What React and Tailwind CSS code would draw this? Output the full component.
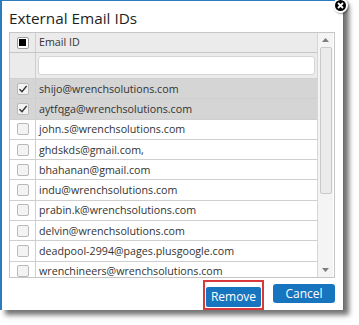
const emails = [
  { email: "shijo@wrenchsolutions.com", checked: true },
  { email: "aytfqga@wrenchsolutions.com", checked: true },
  { email: "john.s@wrenchsolutions.com", checked: false },
  { email: "ghdskds@gmail.com,", checked: false },
  { email: "bhahanan@gmail.com", checked: false },
  { email: "indu@wrenchsolutions.com", checked: false },
  { email: "prabin.k@wrenchsolutions.com", checked: false },
  { email: "delvin@wrenchsolutions.com", checked: false },
  { email: "deadpool-2994@pages.plusgoogle.com", checked: false },
  { email: "wrenchineers@wrenchsolutions.com", checked: false },
];

function Checkbox({ checked }) {
  return (
    <span className="flex h-[12px] w-[12px] items-center justify-center rounded-[2px] border border-[#b9b9b9] bg-[#f3f3f3]">
      {checked && (
        <svg width="10" height="10" viewBox="0 0 10 10">
          <path d="M1.5 5.2 L4 7.8 L8.6 2" fill="none" stroke="#333" strokeWidth="1.4" />
        </svg>
      )}
    </span>
  );
}

export default function App() {
  return (
    <div className="h-[325px] w-[359px] bg-white" style={{ fontFamily: '"Open Sans", sans-serif' }}>
      <div className="relative h-[310px] w-[344px] border-l-2 border-r border-t border-[#2b7bbd] bg-white pl-[7px] pr-[8px] shadow-[5px_5px_5px_rgba(0,0,0,0.55)]">
        {/* close button */}
        <span className="absolute left-[331px] top-[-3px] flex h-[15px] w-[15px] items-center justify-center rounded-full border-2 border-white bg-black shadow-[1px_1px_2px_rgba(0,0,0,0.4)]">
          <svg width="7" height="7" viewBox="0 0 7 7">
            <path d="M1 1 L6 6 M6 1 L1 6" stroke="white" strokeWidth="1.8" />
          </svg>
        </span>

        <h1 className="pt-[6px] text-[15.3px] leading-[22px] text-[#1e1e1e]">External Email IDs</h1>

        <div className="mt-[3px] flex h-[246px] border border-[#c6c6c6]">
          {/* grid */}
          <div className="w-[307px] overflow-hidden text-[10.7px] text-[#333]">
            <div className="flex h-[20px] border-b border-[#c6c6c6] bg-[#ebebeb]">
              <div className="flex w-[26px] items-center justify-center border-r border-[#cfcfcf]">
                <span className="flex h-[12px] w-[12px] items-center justify-center rounded-[2px] border border-[#9a9a9a] bg-white">
                  <span className="h-[7px] w-[7px] bg-black" />
                </span>
              </div>
              <div className="flex items-center pl-[3px]">Email ID</div>
            </div>
            <div className="flex h-[26px] border-b border-[#d0d0d0] bg-[#ebebeb]">
              <div className="w-[26px] border-r border-[#cfcfcf]" />
              <div className="flex flex-1 items-center px-[2px]">
                <div className="h-[19px] w-full rounded-[3px] border border-[#d4d4d4] bg-white" />
              </div>
            </div>
            {emails.map((e) => (
              <div
                key={e.email}
                className={`flex h-[20.3px] border-b border-[#cfcfcf] ${e.checked ? "bg-[#d5d5d5]" : "bg-white"}`}
              >
                <div className="flex w-[26px] items-center justify-center border-r border-[#cfcfcf]">
                  <Checkbox checked={e.checked} />
                </div>
                <div className="flex items-center whitespace-nowrap pl-[3px]">{e.email}</div>
              </div>
            ))}
          </div>

          {/* scrollbar */}
          <div className="flex w-[16px] flex-col items-center border-l border-[#d6d6d6] bg-[#f4f4f4]">
            <div className="flex h-[13px] w-full items-center justify-center">
              <svg width="7" height="4" viewBox="0 0 7 4">
                <path d="M0 4 L3.5 0 L7 4 Z" fill="#7d7d7d" />
              </svg>
            </div>
            <div className="mt-[1px] h-[147px] w-[12px] rounded-[2px] border border-[#c9c9c9] bg-[#ebebeb]" />
            <div className="flex-1" />
            <div className="flex h-[14px] w-full items-center justify-center">
              <svg width="7" height="4" viewBox="0 0 7 4">
                <path d="M0 0 L3.5 4 L7 0 Z" fill="#7d7d7d" />
              </svg>
            </div>
          </div>
        </div>

        <div className="mt-[2px] flex justify-end gap-[9px]">
          <div className="border-2 border-[#d9383d] p-[1px]">
            <button className="h-[20px] w-[55px] rounded-[2px] bg-[#1775c0] text-[12px] text-white">Remove</button>
          </div>
          <button className="mt-[4px] h-[19px] w-[62px] rounded-[3px] bg-[#1775c0] text-[12px] text-white">Cancel</button>
        </div>
      </div>
    </div>
  );
}
